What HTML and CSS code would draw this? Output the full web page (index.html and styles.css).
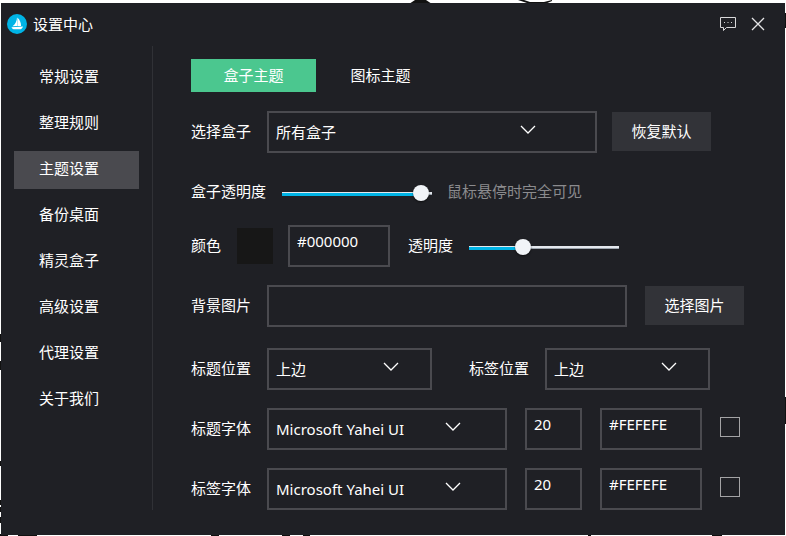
FILE: index.html
```html
<!DOCTYPE html>
<html lang="zh-CN">
<head>
    <meta charset="utf-8">
    <title>设置中心</title>
    <link rel="stylesheet" href="styles.css">
</head>
<body>
    <!-- desktop drawing that shows around the window edges -->
    <svg class="backdrop" viewBox="0 0 786 536" preserveAspectRatio="none" aria-hidden="true">
        <path d="M409 4L415 0H426L432 4ZM518 0H524L530 2H544L552 0V1L545 4H530Z"/>
        <path d="M0 334h2v8h-2zM0 361h2v9h-2zM0 461h2v5h-2zM0 500h2v5h-2zM0 507h2v5h-2zM0 517h2v6h-2z"/>
        <path d="M784 13h2v15h-2zM784 397h2v27h-2z"/>
        <path d="M0 534h8v2h-8zM18 534h19v2h-19zM211 534h8v2h-8zM282 534h8v2h-8zM303 534h7v2h-7zM588 534h3v2h-3zM712 534h10v2h-10z"/>
    </svg>

    <div class="window">
        <header class="titlebar">
            <svg class="logo" viewBox="0 0 20 20" aria-hidden="true">
                <circle cx="10" cy="10" r="10" fill="#00b4e6"/>
                <path d="M10 3.500C10 6.500 8.500 10 5.500 12.300L10 12z" fill="#fff"/>
                <path d="M10.300 3.500C12.800 5.500 14.200 9 14 12L10.300 12z" fill="#fff"/>
                <path d="M4.500 13.300L16 12.500C15.500 14 14.500 15 13.500 15.300L6.500 15.300C5.500 14.900 4.800 14.200 4.500 13.300z" fill="#fff"/>
            </svg>
            <h1>设置中心</h1>
            <button type="button" class="icon-btn" aria-label="反馈">
                <svg width="18" height="16" viewBox="0 0 18 16" fill="none" stroke="#d8d8da">
                    <path d="M1.500 1.500H16.500V11.500H7.500L4.500 14.500V11.500H1.500Z"/>
                    <path d="M5 6.500h1M8.500 6.500h1M12 6.500h1"/>
                </svg>
            </button>
            <button type="button" class="icon-btn" aria-label="关闭">
                <svg width="14" height="14" viewBox="0 0 14 14" fill="none" stroke="#e4e4e6" stroke-width="1.300">
                    <path d="M1 1L13 13M13 1L1 13"/>
                </svg>
            </button>
        </header>

        <div class="body">
            <nav class="sidebar">
                <a href="#general">常规设置</a>
                <a href="#rules">整理规则</a>
                <a href="#theme" class="active">主题设置</a>
                <a href="#backup">备份桌面</a>
                <a href="#box">精灵盒子</a>
                <a href="#advanced">高级设置</a>
                <a href="#proxy">代理设置</a>
                <a href="#about">关于我们</a>
            </nav>

            <main class="content">
                <div class="tabs">
                    <button type="button" class="tab active">盒子主题</button>
                    <button type="button" class="tab">图标主题</button>
                </div>

                <div class="row">
                    <label for="box">选择盒子</label>
                    <div class="select wide">
                        <select id="box"><option>所有盒子</option></select>
                        <svg class="arrow" viewBox="0 0 16 9"><path d="M1 1L8 8L15 1"/></svg>
                    </div>
                    <button type="button" class="btn">恢复默认</button>
                </div>

                <div class="row slider-row">
                    <label for="boxOpacity">盒子透明度</label>
                    <input type="range" id="boxOpacity" min="0" max="100" value="98" style="--value: 98%">
                    <span class="hint">鼠标悬停时完全可见</span>
                </div>

                <div class="row">
                    <label for="color">颜色</label>
                    <span class="swatch"></span>
                    <input type="text" id="color" class="color" value="#000000">
                    <label for="opacity" class="second">透明度</label>
                    <input type="range" id="opacity" min="0" max="100" value="34" style="--value: 34%">
                </div>

                <div class="row">
                    <label for="image">背景图片</label>
                    <input type="text" id="image" class="image">
                    <button type="button" class="btn pick">选择图片</button>
                </div>

                <div class="row group">
                    <label for="titlePos">标题位置</label>
                    <div class="select small">
                        <select id="titlePos"><option>上边</option></select>
                        <svg class="arrow" viewBox="0 0 16 9"><path d="M1 1L8 8L15 1"/></svg>
                    </div>
                    <label for="labelPos" class="far">标签位置</label>
                    <div class="select small">
                        <select id="labelPos"><option>上边</option></select>
                        <svg class="arrow" viewBox="0 0 16 9"><path d="M1 1L8 8L15 1"/></svg>
                    </div>
                </div>

                <div class="row">
                    <label for="titleFont">标题字体</label>
                    <div class="select medium">
                        <select id="titleFont"><option>Microsoft Yahei UI</option></select>
                        <svg class="arrow" viewBox="0 0 16 9"><path d="M1 1L8 8L15 1"/></svg>
                    </div>
                    <input type="text" class="size" value="20" aria-label="标题字号">
                    <input type="text" class="color" value="#FEFEFE" aria-label="标题颜色">
                    <input type="checkbox" aria-label="标题加粗">
                </div>

                <div class="row">
                    <label for="labelFont">标签字体</label>
                    <div class="select medium">
                        <select id="labelFont"><option>Microsoft Yahei UI</option></select>
                        <svg class="arrow" viewBox="0 0 16 9"><path d="M1 1L8 8L15 1"/></svg>
                    </div>
                    <input type="text" class="size" value="20" aria-label="标签字号">
                    <input type="text" class="color" value="#FEFEFE" aria-label="标签颜色">
                    <input type="checkbox" aria-label="标签加粗">
                </div>
            </main>
        </div>
    </div>
</body>
</html>
```

FILE: styles.css
```css
* {
    box-sizing: border-box;
}

body {
    position: relative;
    margin: 0;
    min-height: 100vh;
    padding: 3px 1px 1px;
    display: flex;
    background: #fff;
    color: #fff;
    font-family: "Noto Sans", "Noto Sans CJK SC", sans-serif;
    font-size: 15px;
    line-height: 20px;
}

button, input, select {
    margin: 0;
    font: inherit;
    color: inherit;
}

.backdrop {
    position: absolute;
    top: 0;
    left: 0;
    width: 100%;
    height: 100%;
    fill: #111;
}

.window {
    position: relative;
    flex: 1;
    display: flex;
    flex-direction: column;
    background: #1f2025;
}

/* title bar */
.titlebar {
    display: flex;
    align-items: center;
    height: 43px;
    padding: 0 20px 2px 6px;
}

.logo {
    width: 20px;
    height: 20px;
    margin-right: 6px;
}

.titlebar h1 {
    flex: 1;
    margin: 0;
    font-size: 15px;
    font-weight: normal;
}

.icon-btn {
    display: flex;
    padding: 0;
    margin-left: 14px;
    border: 0;
    background: none;
}

.body {
    flex: 1;
    display: flex;
    padding-bottom: 25px;
}

/* left menu */
.sidebar {
    width: 152px;
    padding: 13px 13px 0;
    border-right: 1px solid #303136;
    display: flex;
    flex-direction: column;
    gap: 8px;
}

.sidebar a {
    padding: 7px 25px 11px;
    color: #fff;
    text-decoration: none;
}

.sidebar a.active {
    background: #4a4a4f;
}

/* settings form */
.content {
    flex: 1;
    display: flex;
    flex-direction: column;
    gap: 18px;
    padding: 13px 41px 0 38px;
}

.tabs {
    display: flex;
    gap: 2px;
    margin-bottom: 1px;
}

.tab {
    width: 125px;
    height: 33px;
    padding: 0 0 2px;
    border: 0;
    background: none;
}

.tab.active {
    background: #4bc78f;
}

.row {
    display: flex;
    align-items: center;
    height: 42px;
}

.row label {
    margin-right: 16px;
    padding-bottom: 2px;
    white-space: nowrap;
}

.row .second {
    margin-left: 18px;
}

.row .far {
    margin-left: 37px;
}

.slider-row {
    height: 36px;
    padding-top: 6px;
}

.group {
    margin-top: 3px;
}

.select {
    position: relative;
}

.wide {
    width: 330px;
}

.medium {
    width: 240px;
}

.small {
    width: 165px;
}

select, input[type="text"] {
    height: 42px;
    border: 2px solid #4a4a4f;
    border-radius: 0;
    background: transparent;
    outline: none;
}

select {
    display: block;
    width: 100%;
    padding: 0 7px;
    appearance: none;
}

option {
    background: #1f2025;
}

.arrow {
    position: absolute;
    top: 14px;
    right: calc(17% + 5px);
    width: 16px;
    height: 9px;
    fill: none;
    stroke: #fff;
    stroke-width: 1.3;
    pointer-events: none;
}

input[type="text"] {
    padding: 0 7px 10px;
}

.color {
    width: 102px;
}

.size {
    width: 57px;
    margin: 0 18px;
}

.image {
    flex: 1;
    min-width: 0;
}

.btn {
    width: 99px;
    height: 39px;
    margin: 0 0 2px 15px;
    padding: 0;
    border: 0;
    background: #323338;
}

.pick {
    margin-left: 18px;
}

.swatch {
    width: 36px;
    height: 36px;
    margin-right: 15px;
    background: #171717;
}

.hint {
    margin-left: 15px;
    padding-bottom: 2px;
    color: #8b8b8e;
}

input[type="range"] {
    width: 150px;
    height: 16px;
    margin-top: 4px;
    appearance: none;
    background: none;
}

input[type="range"]::-webkit-slider-runnable-track {
    height: 4px;
    background:
        linear-gradient(#e4e8ee, #e4e8ee) 0 0 / 100% 1px no-repeat,
        linear-gradient(#00b4e6, #00b4e6) 0 0 / calc(var(--value) - 4px) 100% no-repeat,
        linear-gradient(#e4e8ee 2px, #9da5ae 2px) 0 0 / 100% 3px no-repeat;
}

input[type="range"]::-webkit-slider-thumb {
    width: 16px;
    height: 16px;
    margin-top: -7px;
    appearance: none;
    border-radius: 50%;
    background: #f1f4f8;
    box-shadow: 0 1px 2px rgba(0, 0, 0, 0.6);
}

input[type="checkbox"] {
    width: 20px;
    height: 20px;
    margin: 0 0 4px 18px;
    appearance: none;
    border: 1px solid #a3a3a5;
}
```
